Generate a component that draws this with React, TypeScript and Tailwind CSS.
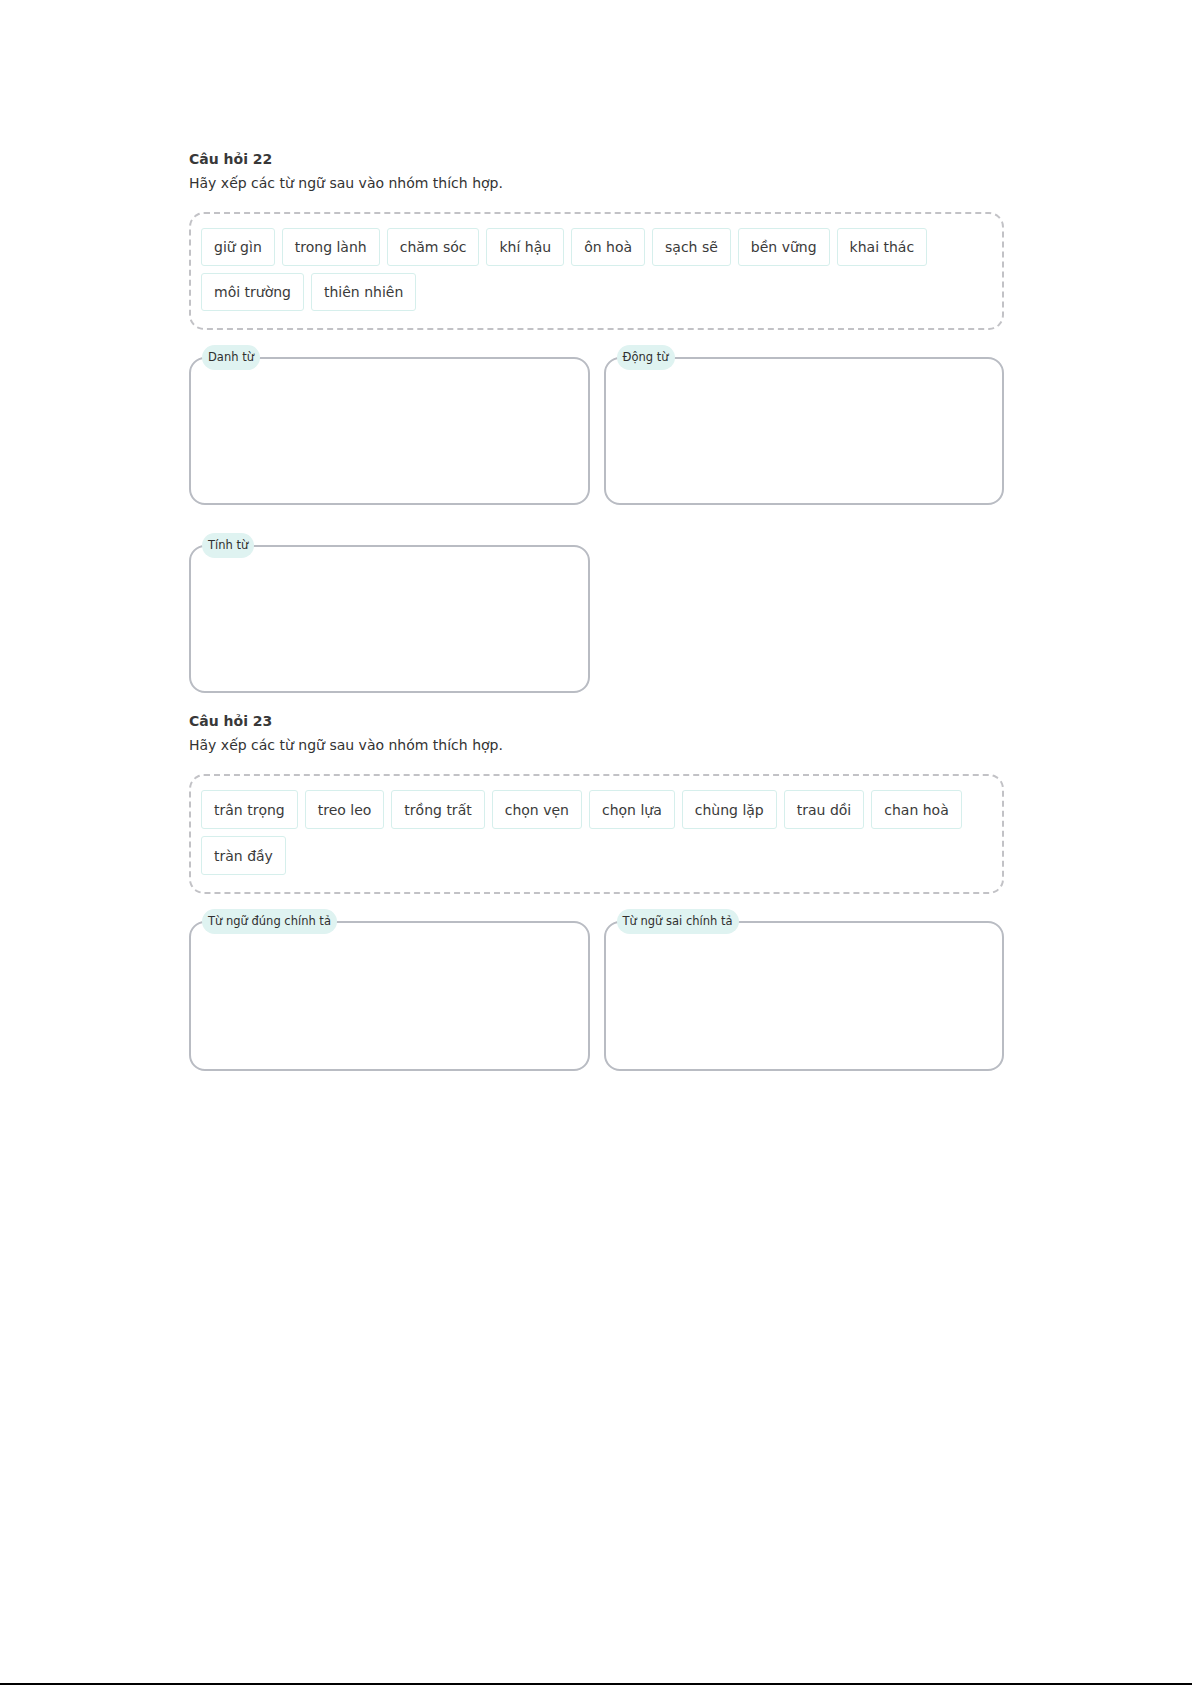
const FONT = "font-['DejaVu_Sans','Verdana','Noto_Sans',sans-serif]";

type Question = {
  title: string;
  prompt: string;
  words: string[];
  groups: string[];
  tall?: boolean;
};

const QUESTIONS: Question[] = [
  {
    title: 'Câu hỏi 22',
    prompt: 'Hãy xếp các từ ngữ sau vào nhóm thích hợp.',
    words: [
      'giữ gìn',
      'trong lành',
      'chăm sóc',
      'khí hậu',
      'ôn hoà',
      'sạch sẽ',
      'bền vững',
      'khai thác',
      'môi trường',
      'thiên nhiên',
    ],
    groups: ['Danh từ', 'Động từ', 'Tính từ'],
  },
  {
    title: 'Câu hỏi 23',
    prompt: 'Hãy xếp các từ ngữ sau vào nhóm thích hợp.',
    words: [
      'trân trọng',
      'treo leo',
      'trồng trất',
      'chọn vẹn',
      'chọn lựa',
      'chùng lặp',
      'trau dồi',
      'chan hoà',
      'tràn đầy',
    ],
    groups: ['Từ ngữ đúng chính tả', 'Từ ngữ sai chính tả'],
    tall: true,
  },
];

function WordChip({ word, tall }: { word: string; tall?: boolean }) {
  return (
    <span
      className={`inline-flex items-center ${tall ? 'h-[39px]' : 'h-[38px]'} px-[12px] border border-[#d6efec] rounded-[3px] bg-white text-[14px] text-[#3a3a3a] leading-none`}
    >
      {word}
    </span>
  );
}

function DropGroup({ label, tall }: { label: string; tall?: boolean }) {
  return (
    <div className={`relative ${tall ? 'h-[150px]' : 'h-[148px]'} border-2 border-[#b9bcc3] rounded-[16px] bg-white`}>
      <span className="absolute left-[11px] -top-[14px] h-[25px] px-[6px] flex items-center rounded-full bg-[#dff3f1] text-[11.5px] text-[#2f2f2f]">
        {label}
      </span>
    </div>
  );
}

function QuestionBlock({ q }: { q: Question }) {
  return (
    <section className="flex flex-col">
      <h3 className="text-[14px] leading-[20px] font-bold text-[#383838]">{q.title}</h3>
      <p className="mt-[3px] text-[14px] leading-[22px] text-[#333]">{q.prompt}</p>

      <div className="mt-[18px] border-2 border-dashed border-[#c2c2c6] rounded-[15px] pt-[14px] pb-[17px] px-[10px] flex flex-wrap gap-x-[7px] gap-y-[7px]">
        {q.words.map((w) => (
          <WordChip key={w} word={w} tall={q.tall} />
        ))}
      </div>

      <div className="mt-[27px] grid grid-cols-2 gap-x-[14px] gap-y-[40px]">
        {q.groups.map((g) => (
          <DropGroup key={g} label={g} tall={q.tall} />
        ))}
      </div>
    </section>
  );
}

export default function App() {
  return (
    <div className={`${FONT} h-[1685px] bg-white border-b-2 border-black`}>
      <div className="pt-[149px] pl-[189px] w-[1004px] flex flex-col gap-[18px]">
        {QUESTIONS.map((q) => (
          <QuestionBlock key={q.title} q={q} />
        ))}
      </div>
    </div>
  );
}
